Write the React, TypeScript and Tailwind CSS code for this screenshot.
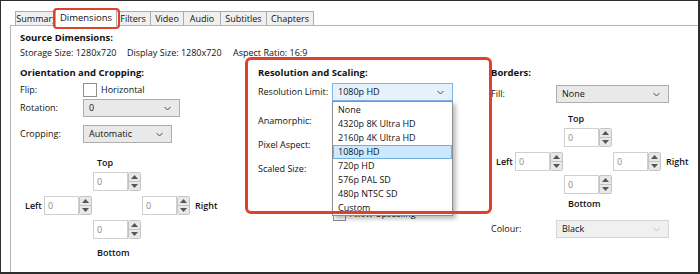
import React from "react";
import clsx from "clsx";

const Chevron = ({ muted = false }: { muted?: boolean }) => (
  <svg width="7" height="5" viewBox="0 0 7 5" className="shrink-0">
    <path d="M0.5 1 L3.5 4 L6.5 1" fill="none" stroke={muted ? "#bdbdbd" : "#4a4a4a"} strokeWidth="1" />
  </svg>
);

const Select = ({
  value,
  className,
  focused,
  disabled,
}: {
  value: string;
  className: string;
  focused?: boolean;
  disabled?: boolean;
}) => (
  <div
    className={clsx(
      "flex items-center justify-between h-[18px] border pl-[5px] pr-[8px]",
      focused && "bg-[#e5f1fb] border-[#7eb4ea]",
      disabled && "bg-[#f0f0f0] border-[#d6d6d6]",
      !focused && !disabled && "bg-[#e9e9e9] border-[#adadad]",
      className
    )}
  >
    <span>{value}</span>
    <Chevron muted={disabled} />
  </div>
);

const Spin = () => (
  <div className="flex h-[19px]">
    <div className="w-[35px] h-full border border-[#cfcfcf] bg-white text-[#8c8c8c] pl-[3px] leading-[17px]">0</div>
    <div className="w-[13px] h-full flex flex-col border border-[#c4c4c4] rounded-[2px] overflow-hidden">
      <div className="flex-1 bg-[#e8e8e8] flex items-center justify-center border-b border-[#c4c4c4]">
        <svg width="7" height="4" viewBox="0 0 7 4">
          <path d="M0 4 L3.5 0 L7 4 Z" fill="#555" />
        </svg>
      </div>
      <div className="flex-1 bg-[#e8e8e8] flex items-center justify-center">
        <svg width="7" height="4" viewBox="0 0 7 4">
          <path d="M0 0 L3.5 4 L7 0 Z" fill="#555" />
        </svg>
      </div>
    </div>
  </div>
);

const Crop = ({ topGap, bottomGap, bottomLabelGap }: { topGap: string; bottomGap: string; bottomLabelGap: string }) => (
  <div className="flex flex-col">
    <div className={clsx("pl-[77px] font-semibold", topGap)}>Top</div>
    <div className="pl-[73px] mt-[2px]">
      <Spin />
    </div>
    <div className="flex items-center mt-[5px]">
      <span className="pl-[5px] w-[24px] font-semibold">Left</span>
      <Spin />
      <div className="ml-[50px]">
        <Spin />
      </div>
      <span className="ml-[5px] font-semibold">Right</span>
    </div>
    <div className={clsx("pl-[73px]", bottomGap)}>
      <Spin />
    </div>
    <div className={clsx("pl-[77px] font-semibold", bottomLabelGap)}>Bottom</div>
  </div>
);

const tabs = [
  { name: "Summary", w: "w-[43px]" },
  { name: "Dimensions", w: "w-[62px]", active: true },
  { name: "Filters", w: "w-[36px]" },
  { name: "Video", w: "w-[34px]" },
  { name: "Audio", w: "w-[38px]" },
  { name: "Subtitles", w: "w-[47px]" },
  { name: "Chapters", w: "w-[48px]" },
];

const resolutions = ["None", "4320p 8K Ultra HD", "2160p 4K Ultra HD", "1080p HD", "720p HD", "576p PAL SD", "480p NTSC SD", "Custom"];

export default function App() {
  return (
    <div className="relative w-[700px] h-[274px] bg-white border-t border-l border-r-2 border-b-2 border-[#2e2e2e] overflow-hidden whitespace-nowrap font-['Open_Sans',sans-serif] text-[9px] leading-[14px] text-[#111]">
      <div className="pl-[9px] h-full flex flex-col">
        {/* tab strip */}
        <div className="flex items-end h-[15px] mt-[9px] pl-[5px]">
          {tabs.map((t) =>
            t.active ? (
              <div
                key={t.name}
                className={clsx(
                  "relative z-10 -ml-[3px] -mr-[1px] -mb-px h-[18px] bg-white border border-b-0 border-[#acacac] flex items-center justify-center text-[9.5px]",
                  t.w
                )}
              >
                {t.name}
              </div>
            ) : (
              <div
                key={t.name}
                className={clsx(
                  "h-[14px] -ml-px first:ml-0 bg-[#f0f0f0] border border-b-0 border-[#acacac] flex items-center justify-center overflow-hidden",
                  t.w
                )}
              >
                {t.name}
              </div>
            )
          )}
        </div>

        {/* panel */}
        <div className="flex-1 border-t border-l border-[#b4b4b4] pl-[9px] pt-[5px]">
          <div className="font-bold text-[9.5px]">Source Dimensions:</div>
          <div className="flex mt-[1px]">
            <span className="w-[107px]">Storage Size: 1280x720</span>
            <span className="w-[106px]">Display Size: 1280x720</span>
            <span>Aspect Ratio: 16:9</span>
          </div>

          <div className="flex mt-[6px]">
            {/* orientation and cropping */}
            <div className="w-[238px] flex flex-col">
              <div className="font-bold text-[9.5px]">Orientation and Cropping:</div>
              <div className="flex items-center h-[14px] mt-[3px]">
                <span className="w-[63px]">Flip:</span>
                <div className="w-[14px] h-[14px] border border-[#8f8f8f] bg-white" />
                <span className="ml-[4px]">Horizontal</span>
              </div>
              <div className="flex items-center mt-[2px]">
                <span className="w-[63px]">Rotation:</span>
                <Select value="0" className="w-[97px]" />
              </div>
              <div className="flex items-center mt-[8px]">
                <span className="w-[63px]">Cropping:</span>
                <Select value="Automatic" className="w-[89px]" />
              </div>
              <Crop topGap="mt-[13px]" bottomGap="mt-[5px]" bottomLabelGap="mt-[7px]" />
            </div>

            {/* resolution and scaling */}
            <div className="w-[233px] flex flex-col">
              <div className="font-bold text-[9.5px]">Resolution and Scaling:</div>
              <div className="flex items-center mt-[3px]">
                <span className="w-[74px]">Resolution Limit:</span>
                <div className="relative">
                  <Select value="1080p HD" className="w-[121px]" focused />
                  <div className="absolute z-20 left-0 top-[18px] w-[121px] bg-white border border-[#8f8f8f] shadow-[3px_3px_4px_rgba(0,0,0,0.25)] pt-px">
                    {resolutions.map((r) => (
                      <div
                        key={r}
                        className={clsx(
                          "h-[14px] pl-[4px] leading-[12px] border",
                          r === "1080p HD" ? "bg-[#cce8ff] border-[#6fb2e2]" : "border-transparent"
                        )}
                      >
                        {r}
                      </div>
                    ))}
                  </div>
                </div>
              </div>
              <div className="mt-[13px]">Anamorphic:</div>
              <div className="mt-[10px]">Pixel Aspect:</div>
              <div className="mt-[10px]">Scaled Size:</div>
              <div className="flex items-center mt-[31px] pl-[75px]">
                <div className="w-[13px] h-[13px] border border-[#8f8f8f] bg-white" />
                <span className="ml-[4px]">Allow Upscaling</span>
              </div>
            </div>

            {/* borders */}
            <div className="flex flex-col">
              <div className="font-bold text-[9.5px]">Borders:</div>
              <div className="flex items-center mt-[5px]">
                <span className="w-[65px]">Fill:</span>
                <Select value="None" className="w-[113px]" />
              </div>
              <Crop topGap="mt-[9px]" bottomGap="mt-[4px]" bottomLabelGap="mt-[3px]" />
              <div className="flex items-center mt-[9px]">
                <span className="w-[65px]">Colour:</span>
                <Select value="Black" className="w-[113px]" disabled />
              </div>
            </div>
          </div>
        </div>
      </div>

      {/* annotation highlights */}
      <div className="absolute z-30 left-[52px] top-[7px] w-[67px] h-[21px] border-2 border-[#e0412b] rounded-[4px]" />
      <div className="absolute z-30 left-[244px] top-[56px] w-[247px] h-[157px] border-[3px] border-[#e0412b] rounded-[6px]" />
    </div>
  );
}
